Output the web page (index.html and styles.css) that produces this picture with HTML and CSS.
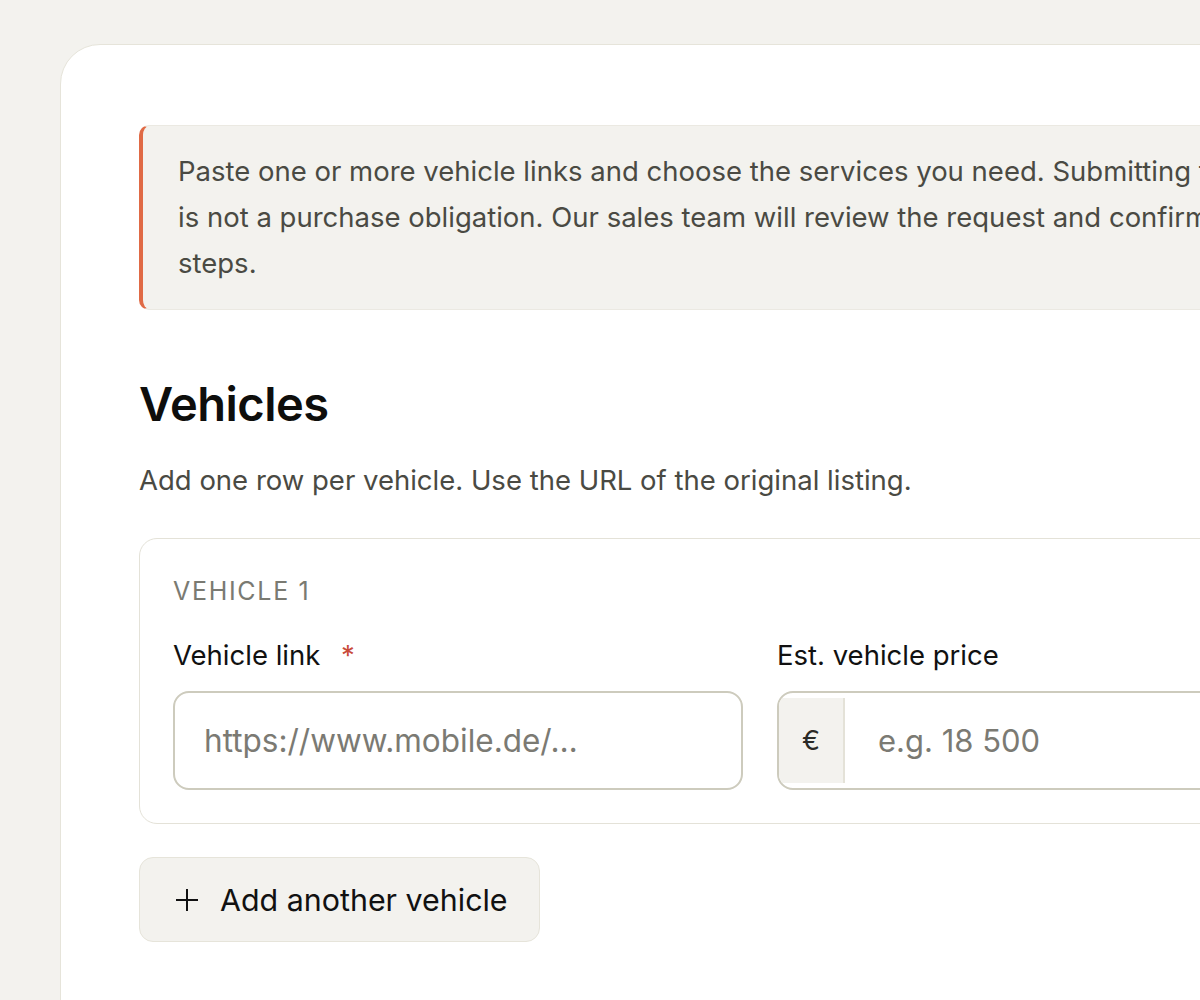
FILE: index.html
```html
<!DOCTYPE html>
<html lang="en">
<head>
<meta charset="utf-8">
<title>Vehicle request</title>
<link rel="stylesheet" href="styles.css">
</head>
<body>
<main class="sheet">
  <div class="notice">
    <p>Paste one or more vehicle links and choose the services you need. Submitting this request is not a purchase obligation. Our sales team will review the request and confirm the next steps.</p>
  </div>

  <section class="vehicles">
    <h2 class="title">Vehicles</h2>
    <p class="lead">Add one row per vehicle. Use the URL of the original listing.</p>

    <div class="vehicle-card">
      <div class="vehicle-tag">VEHICLE 1</div>
      <div class="fields">
        <div class="field">
          <label class="label" for="link">Vehicle link <span class="req">*</span></label>
          <input class="input" id="link" type="text" placeholder="https://www.mobile.de/…">
        </div>
        <div class="field">
          <label class="label" for="price">Est. vehicle price</label>
          <div class="price-box">
            <span class="prefix">€</span>
            <input class="price-input" id="price" type="text" placeholder="e.g. 18 500">
          </div>
        </div>
      </div>
    </div>

    <button class="add-btn" type="button"><svg class="plus" width="22" height="24" viewBox="0 0 22 24" aria-hidden="true"><path d="M11 1v22M0 12h22" stroke="#111" stroke-width="2" fill="none"/></svg><span>Add another vehicle</span></button>
  </section>
</main>
</body>
</html>
```

FILE: styles.css
```css
* { box-sizing: border-box; }
html, body { margin: 0; padding: 0; }
body {
  background: #f3f2ee;
  font-family: Inter, "Noto Sans", sans-serif;
  color: #111;
  width: 1200px;
  height: 1000px;
  overflow: hidden;
}
.sheet {
  margin: 44px 0 0 60px;
  width: 1403px;
  min-height: 1100px;
  background: #fff;
  border: 1.5px solid #e6e4da;
  border-radius: 40px;
  padding: 80px 78px;
}
.notice {
  background: #f3f2ee;
  border: 1px solid #ebe9e2;
  border-left: 4px solid #e06a45;
  border-radius: 10px;
  padding: 22px 0 23px 35px;
}
.notice p {
  margin: 0;
  font-size: 27.5px;
  line-height: 46px;
  color: #4a4a43;
  max-width: 1185px;
}
.title {
  margin: 66px 0 0;
  font-size: 47px;
  font-weight: 600;
  line-height: 56px;
  color: #0e0e0c;
  letter-spacing: -0.5px;
}
.lead {
  margin: 30px 0 0;
  font-size: 27.5px;
  line-height: 36px;
  color: #4a4a43;
}
.vehicle-card {
  margin-top: 40px;
  border: 1.5px solid #e4e2d8;
  border-radius: 18px;
  padding: 36px 33px 33px;
}
.vehicle-tag {
  font-size: 25px;
  line-height: 32px;
  letter-spacing: 1.7px;
  color: #7a7a72;
}
.fields {
  margin-top: 31px;
  display: grid;
  grid-template-columns: 570px 570px;
  column-gap: 34px;
}
.field { display: flex; flex-direction: column; }
.label {
  font-size: 27.5px;
  line-height: 34px;
  color: #111;
  margin-bottom: 19px;
}
.req { color: #c94a3a; margin-left: 13px; }
.input {
  height: 99px;
  border: 2px solid #cdcbbd;
  border-radius: 16px;
  padding: 0 29px;
  font-family: inherit;
  font-size: 31.5px;
  color: #111;
  background: #fff;
  outline: none;
}
.input::placeholder, .price-input::placeholder { color: #7b7a73; }
.price-box {
  height: 99px;
  border: 2px solid #cdcbbd;
  border-radius: 16px;
  display: flex;
  overflow: hidden;
  background: #fff;
}
.prefix {
  width: 66px;
  flex: none;
  margin: 5px 0;
  background: #f3f2ee;
  border-right: 2px solid #e4e2d8;
  display: flex;
  align-items: center;
  justify-content: center;
  font-size: 27px;
  color: #2a2a26;
}
.price-input {
  flex: 1;
  border: 0;
  padding: 0 33px;
  font-family: inherit;
  font-size: 31px;
  outline: none;
  background: transparent;
  min-width: 0;
}
.add-btn {
  margin-top: 33px;
  height: 85px;
  padding: 0 31px 0 36px;
  display: inline-flex;
  align-items: center;
  gap: 22px;
  background: #f3f2ee;
  border: 1.5px solid #e6e4da;
  border-radius: 14px;
  font-family: inherit;
  font-size: 30.4px;
  color: #111;
  cursor: pointer;
}
.plus { display: block; flex: none; }
```
